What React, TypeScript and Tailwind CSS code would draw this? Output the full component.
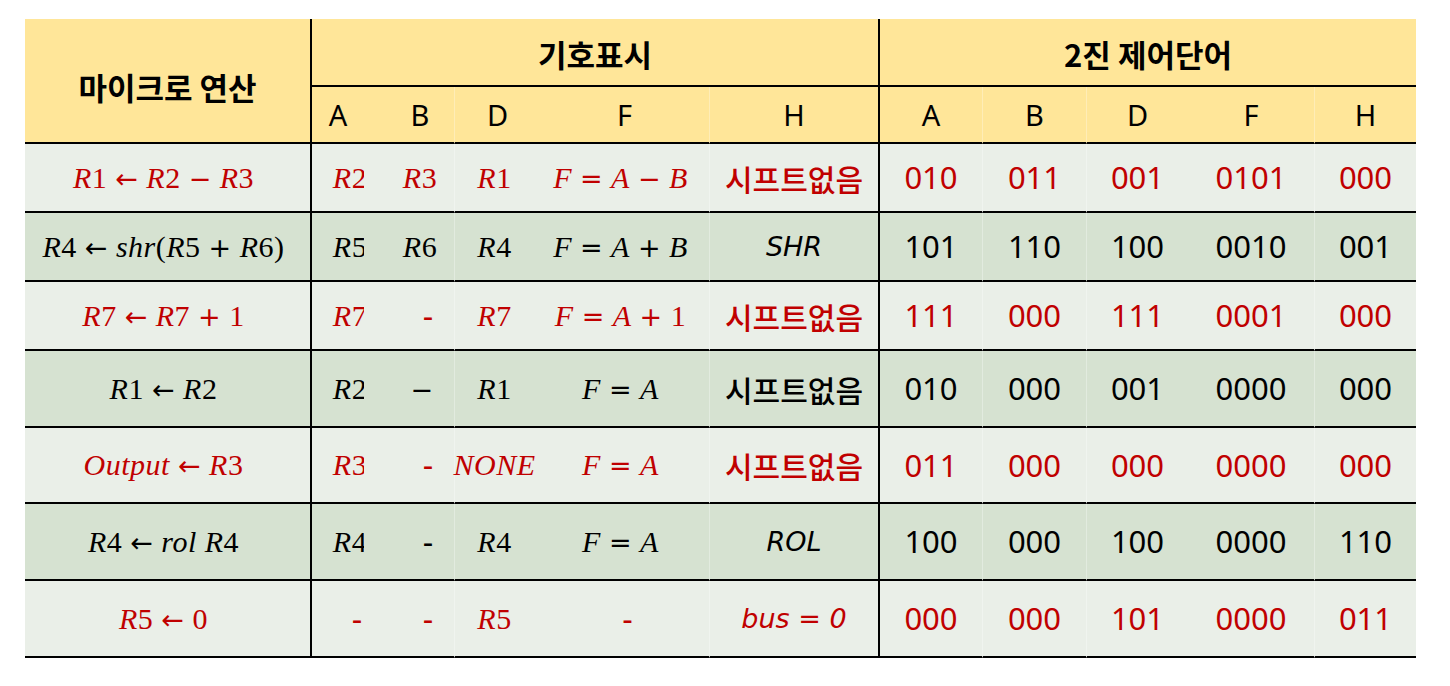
import React from "react";

const SERIF = "font-['Liberation_Serif',serif]";
const OPS = "font-['DejaVu_Sans',sans-serif]";
const SANS = "font-['Noto_Sans','Noto_Sans_CJK_KR',sans-serif]";
const KR = "font-['Noto_Sans_CJK_KR',sans-serif]";
const DV = "font-['DejaVu_Sans',sans-serif]";

function M({ s }: { s: string }) {
  const parts = s.split(/([A-Za-z]+|[←=+−])/).filter((p) => p !== "");
  return (
    <span className={`${SERIF} text-[30px] tracking-[0.5px] whitespace-pre leading-none`}>
      {parts.map((p, i) => {
        if (/[A-Za-z]/.test(p)) return <i key={i}>{p}</i>;
        if (/[←=+−]/.test(p))
          return (
            <span key={i} className={`${OPS} ${p === "←" ? "text-[27px]" : "text-[27px]"}`}>
              {p}
            </span>
          );
        return <span key={i}>{p}</span>;
      })}
    </span>
  );
}

function D({ s }: { s: string }) {
  return <span className={`${SERIF} text-[30px] font-bold leading-none`}>{s}</span>;
}

function K({ s }: { s: string }) {
  return <span className={`${KR} text-[30px] font-medium leading-none`}>{s}</span>;
}

function N({ s }: { s: string }) {
  return <span className={`${SANS} text-[31px] leading-none`}>{s}</span>;
}

function I({ s }: { s: string }) {
  return <span className={`${DV} text-[27px] italic leading-none whitespace-pre`}>{s}</span>;
}

type Cell = { node: React.ReactNode; cls?: string };

type Row = { dark: boolean; red: boolean; h: string; cells: Cell[] };

const colExtra = [
  "border-r-2 border-r-black",
  "",
  "",
  "border-l border-l-white/30",
  "",
  "border-l border-l-white/30 border-r-2 border-r-black",
  "",
  "border-l border-l-white/30",
  "border-l border-l-white/30",
  "",
  "border-l border-l-white/30",
];

const bodyShift = [
  "pr-[8px]",
  "pl-[24px]",
  "pl-[22px]",
  "pr-[6px]",
  "pr-[8px]",
  "",
  "",
  "",
  "",
  "",
  "",
];

const rows: Row[] = [
  {
    dark: false,
    red: true,
    h: "h-[69px]",
    cells: [
      { node: <M s="R1 ← R2 − R3" /> },
      { node: <M s="R2" /> },
      { node: <M s="R3" /> },
      { node: <M s="R1" /> },
      { node: <M s="F = A − B" /> },
      { node: <K s="시프트없음" /> },
      { node: <N s="010" /> },
      { node: <N s="011" /> },
      { node: <N s="001" /> },
      { node: <N s="0101" /> },
      { node: <N s="000" /> },
    ],
  },
  {
    dark: true,
    red: false,
    h: "h-[69px]",
    cells: [
      { node: <M s="R4 ← shr(R5 + R6)" /> },
      { node: <M s="R5" /> },
      { node: <M s="R6" /> },
      { node: <M s="R4" /> },
      { node: <M s="F = A + B" /> },
      { node: <I s="SHR" /> },
      { node: <N s="101" /> },
      { node: <N s="110" /> },
      { node: <N s="100" /> },
      { node: <N s="0010" /> },
      { node: <N s="001" /> },
    ],
  },
  {
    dark: false,
    red: true,
    h: "h-[69px]",
    cells: [
      { node: <M s="R7 ← R7 + 1" /> },
      { node: <M s="R7" /> },
      { node: <D s="-" />, cls: "!pl-[38px]" },
      { node: <M s="R7" /> },
      { node: <M s="F = A + 1" /> },
      { node: <K s="시프트없음" /> },
      { node: <N s="111" /> },
      { node: <N s="000" /> },
      { node: <N s="111" /> },
      { node: <N s="0001" /> },
      { node: <N s="000" /> },
    ],
  },
  {
    dark: true,
    red: false,
    h: "h-[77px]",
    cells: [
      { node: <M s="R1 ← R2" /> },
      { node: <M s="R2" /> },
      { node: <M s="−" />, cls: "!pl-[26px]" },
      { node: <M s="R1" /> },
      { node: <M s="F = A" /> },
      { node: <K s="시프트없음" /> },
      { node: <N s="010" /> },
      { node: <N s="000" /> },
      { node: <N s="001" /> },
      { node: <N s="0000" /> },
      { node: <N s="000" /> },
    ],
  },
  {
    dark: false,
    red: true,
    h: "h-[76px]",
    cells: [
      { node: <M s="Output ← R3" /> },
      { node: <M s="R3" /> },
      { node: <D s="-" />, cls: "!pl-[38px]" },
      { node: <M s="NONE" /> },
      { node: <M s="F = A" /> },
      { node: <K s="시프트없음" /> },
      { node: <N s="011" /> },
      { node: <N s="000" /> },
      { node: <N s="000" /> },
      { node: <N s="0000" /> },
      { node: <N s="000" /> },
    ],
  },
  {
    dark: true,
    red: false,
    h: "h-[77px]",
    cells: [
      { node: <M s="R4 ← rol R4" /> },
      { node: <M s="R4" /> },
      { node: <D s="-" />, cls: "!pl-[38px]" },
      { node: <M s="R4" /> },
      { node: <M s="F = A" /> },
      { node: <I s="ROL" /> },
      { node: <N s="100" /> },
      { node: <N s="000" /> },
      { node: <N s="100" /> },
      { node: <N s="0000" /> },
      { node: <N s="110" /> },
    ],
  },
  {
    dark: false,
    red: true,
    h: "h-[77px]",
    cells: [
      { node: <M s="R5 ← 0" /> },
      { node: <D s="-" />, cls: "!pl-[38px]" },
      { node: <D s="-" />, cls: "!pl-[38px]" },
      { node: <M s="R5" /> },
      { node: <D s="-" />, cls: "!pr-[0px] !pl-[6px]" },
      { node: <I s="bus = 0" /> },
      { node: <N s="000" /> },
      { node: <N s="000" /> },
      { node: <N s="101" /> },
      { node: <N s="0000" /> },
      { node: <N s="011" /> },
    ],
  },
];

const subHeads = ["A", "B", "D", "F", "H", "A", "B", "D", "F", "H"];

export default function App() {
  return (
    <div className="w-[1450px] h-[686px] bg-white pt-[19px] pl-[25px]">
      <div className="grid w-[1391px] grid-cols-[287px_52px_90px_86px_169px_171px_102px_104px_102px_126px_102px] text-black">
        {/* header row 1 */}
        <div className="row-span-2 bg-[#FFE699] border-r-2 border-b-2 border-black flex items-center justify-center pt-[14px]">
          <span className={`${KR} text-[31px] font-bold`}>마이크로 연산</span>
        </div>
        <div className="col-span-5 h-[68px] bg-[#FFE699] border-r-2 border-b-2 border-black flex items-center justify-center pt-[4px]">
          <span className={`${KR} text-[31px] font-bold`}>기호표시</span>
        </div>
        <div className="col-span-5 h-[68px] bg-[#FFE699] border-b-2 border-black flex items-center justify-center pt-[4px]">
          <span className={`${KR} text-[31px] font-bold`}>2진 제어단어</span>
        </div>
        {/* header row 2 */}
        {subHeads.map((h, i) => (
          <div
            key={i}
            className={`h-[57px] bg-[#FFE699] border-b-2 border-b-black flex items-center justify-center ${colExtra[i + 1]} ${i === 1 ? "pl-[22px]" : ""}`}
          >
            <span className={`${SANS} text-[29px]`}>{h}</span>
          </div>
        ))}
        {/* body */}
        {rows.map((r, ri) =>
          r.cells.map((c, ci) => (
            <div
              key={`${ri}-${ci}`}
              className={`${r.h} ${r.dark ? "bg-[#D6E2D1]" : "bg-[#EAEFE8]"} ${r.red ? "text-[#C00000]" : "text-black"} border-b-2 border-b-black flex items-center justify-center whitespace-nowrap ${colExtra[ci]} ${bodyShift[ci]} ${c.cls ?? ""}`}
            >
              {c.node}
            </div>
          ))
        )}
      </div>
    </div>
  );
}
